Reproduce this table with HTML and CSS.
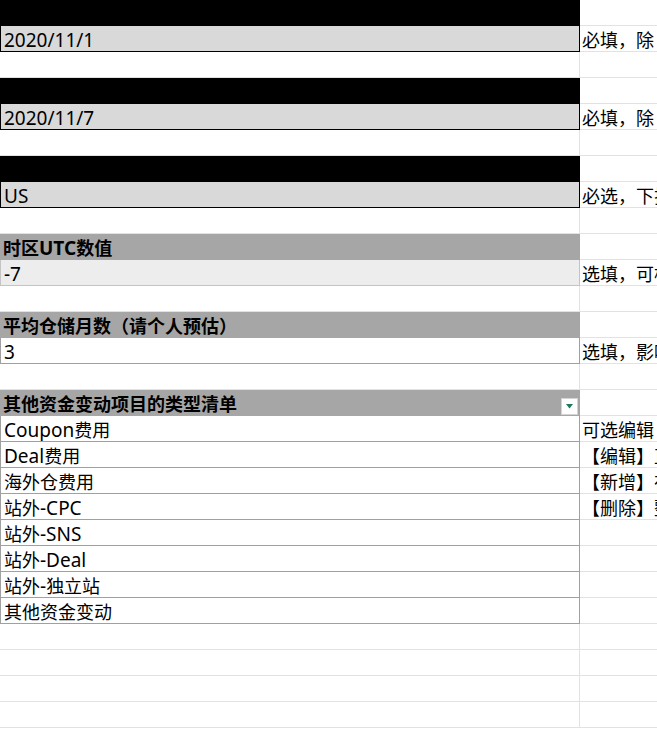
FILE: index.html
```html
<!DOCTYPE html>
<html lang="zh">
<head>
<meta charset="utf-8">
<title>Sheet</title>
<link rel="stylesheet" href="styles.css">
</head>
<body>
<div class="sheet">
  <div class="cell a black"></div><div class="cell b"></div>
  <div class="cell a input"><span><b class="lat">2020/11/1</b></span></div><div class="cell b"><span>必填，除</span></div>
  <div class="cell a"></div><div class="cell b"></div>

  <div class="cell a black"></div><div class="cell b"></div>
  <div class="cell a input"><span><b class="lat">2020/11/7</b></span></div><div class="cell b"><span>必填，除</span></div>
  <div class="cell a"></div><div class="cell b"></div>

  <div class="cell a black"></div><div class="cell b"></div>
  <div class="cell a input"><span><b class="lat">US</b></span></div><div class="cell b"><span>必选，下拉选择站点</span></div>
  <div class="cell a"></div><div class="cell b"></div>

  <div class="cell a head"><span>时区<b class="lat">UTC</b>数值</span></div><div class="cell b"></div>
  <div class="cell a soft"><span><b class="lat">-7</b></span></div><div class="cell b"><span>选填，可根据站点调整</span></div>
  <div class="cell a"></div><div class="cell b"></div>

  <div class="cell a head"><span>平均仓储月数（请个人预估）</span></div><div class="cell b"></div>
  <div class="cell a boxed"><span><b class="lat">3</b></span></div><div class="cell b"><span>选填，影响仓储费用</span></div>
  <div class="cell a"></div><div class="cell b"></div>

  <div class="cell a head filter"><span>其他资金变动项目的类型清单</span><i class="fbtn"><svg width="7" height="5" viewBox="0 0 7 5"><path d="M0 0H7L3.5 4.5Z" fill="#1d7a55"/></svg></i></div><div class="cell b"></div>
  <div class="cell a boxed"><span><b class="lat">Coupon</b>费用</span></div><div class="cell b"><span>可选编辑</span></div>
  <div class="cell a boxed"><span><b class="lat">Deal</b>费用</span></div><div class="cell b"><span>【编辑】直接修改</span></div>
  <div class="cell a boxed"><span>海外仓费用</span></div><div class="cell b"><span>【新增】在下方添加</span></div>
  <div class="cell a boxed"><span>站外<b class="lat">-CPC</b></span></div><div class="cell b"><span>【删除】整行删除</span></div>
  <div class="cell a boxed"><span>站外<b class="lat">-SNS</b></span></div><div class="cell b"></div>
  <div class="cell a boxed"><span>站外<b class="lat">-Deal</b></span></div><div class="cell b"></div>
  <div class="cell a boxed"><span>站外<b class="lat">-</b>独立站</span></div><div class="cell b"></div>
  <div class="cell a boxed"><span>其他资金变动</span></div><div class="cell b"></div>

  <div class="cell a"></div><div class="cell b"></div>
  <div class="cell a"></div><div class="cell b"></div>
  <div class="cell a"></div><div class="cell b"></div>
  <div class="cell a"></div><div class="cell b"></div>
</div>
</body>
</html>
```
FILE: styles.css
```css
html, body {
  margin: 0;
  padding: 0;
  background: #ffffff;
  overflow: hidden;
}
body {
  width: 657px;
  height: 729px;
  font-family: "Noto Sans CJK SC", "Noto Sans", sans-serif;
  font-size: 18px;
  color: #000;
}
.sheet {
  display: grid;
  grid-template-columns: 580px 240px;
  grid-auto-rows: 26px;
}
.cell {
  position: relative;
  box-sizing: border-box;
  border-right: 1px solid #e2e2e2;
  border-bottom: 1px solid #e2e2e2;
  white-space: nowrap;
  overflow: hidden;
  line-height: 24px;
  padding-left: 3px;
}
.cell span {
  display: block;
  position: relative;
  top: 1px;
}
.lat {
  font-family: "Noto Sans", sans-serif;
  font-size: 19px;
  font-weight: inherit;
}
.b {
  padding-left: 2px;
}
.black {
  background: #000;
  border-right-color: #000;
  border-bottom-color: #000;
}
.input {
  background: #d9d9d9;
  border-left: 1px solid #000;
  border-right: 1px solid #000;
  border-bottom: 1px solid #000;
  padding-left: 3px;
}
.head {
  background: #a6a6a6;
  border-right-color: #a6a6a6;
  border-bottom-color: #a6a6a6;
  font-weight: 700;
}
.soft {
  background: #ededed;
  border-left: 1px solid #c4c4c4;
  border-right-color: #c4c4c4;
  border-bottom-color: #c4c4c4;
  padding-left: 3px;
}
.boxed {
  border-left: 1px solid #a0a0a0;
  border-right-color: #a0a0a0;
  border-bottom-color: #a0a0a0;
  padding-left: 3px;
}
.filter {
  overflow: visible;
}
.fbtn {
  position: absolute;
  right: 1px;
  bottom: 0;
  width: 17px;
  height: 17px;
  box-sizing: border-box;
  background: #fff;
  border: 1px solid #d4d4d4;
  display: flex;
  align-items: center;
  justify-content: center;
}
```
